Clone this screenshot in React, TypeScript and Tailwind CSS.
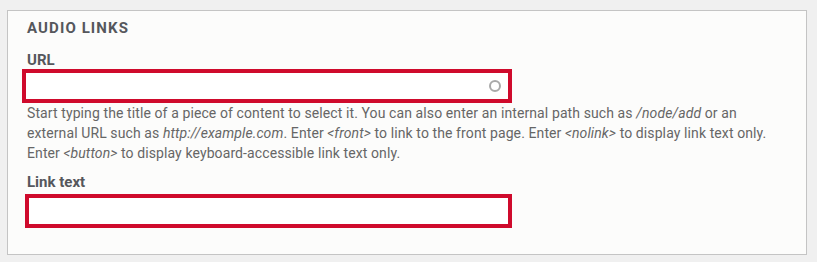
import * as React from "react";

const font = { fontFamily: "Roboto, 'Liberation Sans', sans-serif" };

export default function App() {
  return (
    <div className="w-[817px] h-[262px] bg-[#f0f0f0] pt-[10px] pl-[7px]" style={font}>
      <div className="w-[800px] h-[245px] bg-[#fcfcfb] border border-[#c4c4c4] pl-[19px] pt-[7px]">
        {/* 标题 */}
        <h2 className="text-[15px] leading-[20px] font-bold tracking-[1.1px] text-[#55575c] uppercase">
          Audio links
        </h2>

        {/* URL */}
        <label className="block mt-[15px] mb-[1px] text-[15px] leading-[15px] font-bold text-[#55575c]">URL</label>
        <div className="relative -ml-[5px] w-[490px] h-[34px] border-[4px] border-[#cf0a2c] bg-white">
          <input className="w-full h-full outline-none bg-transparent px-2" />
          <span className="absolute right-[7px] top-1/2 -translate-y-1/2 w-[12px] h-[12px] rounded-full border-2 border-[#a9a9a9]" />
        </div>
        <div className="w-[745px] text-[14px] leading-[20px] tracking-[0.1px] text-[#666666]">
          Start typing the title of a piece of content to select it. You can also enter an internal path such as{" "}
          <em>/node/add</em> or an external URL such as <em>http://example.com</em>. Enter <em>&lt;front&gt;</em> to
          link to the front page. Enter <em>&lt;nolink&gt;</em> to display link text only. Enter{" "}
          <em>&lt;button&gt;</em> to display keyboard-accessible link text only.
        </div>

        {/* Link text */}
        <label className="block mt-[12px] mb-[4px] text-[15px] leading-[15px] font-bold text-[#55575c]">Link text</label>
        <div className="-ml-[2px] w-[487px] h-[34px] border-[4px] border-[#cf0a2c] bg-white">
          <input className="w-full h-full outline-none bg-transparent px-2" />
        </div>
      </div>
    </div>
  );
}
